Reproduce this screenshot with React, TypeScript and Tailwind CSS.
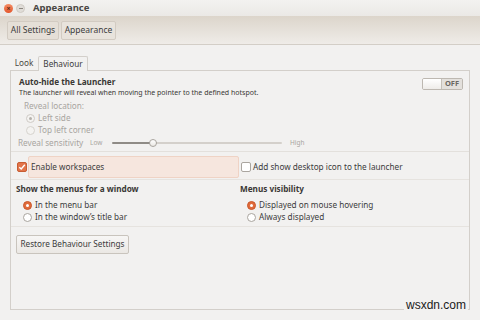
import React from "react";

const Radio = ({ on, disabled }: { on?: boolean; disabled?: boolean }) => (
  <span
    className={
      "inline-flex w-[9px] h-[9px] rounded-full items-center justify-center shrink-0 " +
      (on
        ? disabled
          ? "border border-[#cfcbc6] bg-[#f4f3f1]"
          : "bg-[#e06a3a] border border-[#c9582c]"
        : disabled
        ? "border border-[#d6d3ce] bg-[#f4f3f1]"
        : "border border-[#a9a49e] bg-white")
    }
  >
    {on && (
      <span
        className={
          "w-[3px] h-[3px] rounded-full " + (disabled ? "bg-[#b5b1ac]" : "bg-white")
        }
      />
    )}
  </span>
);

export default function App() {
  const muted = "text-[#a8a5a0]";
  return (
    <div className="relative w-[480px] h-[320px] overflow-hidden bg-[#f2f1f0] font-['Noto_Sans',sans-serif] text-[#3c3c3c]">
      {/* Title bar */}
      <div className="h-[16px] flex items-center pl-[4px] bg-gradient-to-b from-[#f3f2f0] to-[#ebe9e6]">
        <span className="w-[9px] h-[9px] rounded-full bg-gradient-to-b from-[#f48b62] to-[#e3562b] flex items-center justify-center text-[7px] leading-none text-[#5a2a16] font-bold">
          ×
        </span>
        <span className="ml-[3px] w-[9px] h-[9px] rounded-full bg-[#e0ddd8] border border-[#cfcac3] flex items-center justify-center">
          <span className="w-[4px] h-[1px] bg-[#8c8780]" />
        </span>
        <span className="ml-[8px] text-[9.5px] font-bold text-[#4a4743] leading-none">Appearance</span>
      </div>
      {/* Toolbar */}
      <div className="h-[29px] flex items-center gap-[2px] pl-[7px] bg-gradient-to-b from-[#dcd5cb] to-[#efece8] border-b border-[#d3cec7]">
        <div className="h-[19px] w-[52px] flex items-center justify-center rounded-[2px] border border-[#d2cbc2] bg-[#e5dfd7] text-[8.5px]">
          All Settings
        </div>
        <div className="h-[19px] w-[55px] flex items-center justify-center rounded-[2px] border border-[#d2cbc2] bg-[#e8e3dc] text-[8.5px]">
          Appearance
        </div>
      </div>
      {/* Body */}
      <div className="px-[10px] pt-[10px]">
        <div className="flex items-end h-[15px]">
          <div className="w-[28px] h-[14px] flex items-center justify-center text-[8.2px] text-[#4a4743]">Look</div>
          <div className="w-[50px] h-[15px] flex items-center justify-center text-[8.2px] border border-b-0 border-[#d3cfca] rounded-t-[2px] bg-[#f2f1f0] relative top-[1px]">
            Behaviour
          </div>
        </div>
        <div className="w-[460px] h-[240px] border border-[#d3cfca] flex flex-col">
          {/* Auto-hide */}
          <div className="pl-[8px] pr-[6px] pt-[5px] flex">
            <div className="flex-1 flex flex-col">
              <div className="h-[12px] flex items-center text-[8.2px] font-bold text-[#3a3835]">Auto-hide the Launcher</div>
              <div className="h-[10px] flex items-center text-[7px] text-[#3a3835]">
                The launcher will reveal when moving the pointer to the defined hotspot.
              </div>
            </div>
            <div className="mt-[2px] w-[41px] h-[12px] flex rounded-[2px] border border-[#bdb8b1] overflow-hidden">
              <div className="w-[19px] bg-gradient-to-b from-white to-[#eeece9] border-r border-[#c5c0b9]" />
              <div className="flex-1 bg-[#e3e0dc] flex items-center justify-center text-[7.5px] font-bold text-[#6a6762]">OFF</div>
            </div>
          </div>
          <div className={"mt-[2px] pl-[13px] h-[12px] flex items-center text-[8.2px] " + muted}>Reveal location:</div>
          <div className={"pl-[15px] h-[12px] flex items-center gap-[3px] text-[8.2px] " + muted}>
            <Radio on disabled />
            <span>Left side</span>
          </div>
          <div className={"pl-[15px] h-[12px] flex items-center gap-[3px] text-[8.2px] " + muted}>
            <Radio disabled />
            <span>Top left corner</span>
          </div>
          <div className={"mt-[1px] pl-[7px] h-[12px] flex items-center text-[8.2px] " + muted}>
            <span className="w-[72px]">Reveal sensitivity</span>
            <span className="text-[6.5px] w-[22px]">Low</span>
            <div className="relative w-[170px] h-[8px] flex items-center">
              <div className="w-[41px] h-[2px] bg-[#8f8b86] rounded-l" />
              <div className="flex-1 h-[2px] bg-[#d4d0cb] rounded-r" />
              <span className="absolute left-[37px] top-0 w-[8px] h-[8px] rounded-full border border-[#a9a49e] bg-gradient-to-b from-white to-[#ebe8e4]" />
            </div>
            <span className="ml-[8px] text-[6.5px]">High</span>
          </div>
          <div className="mt-[2px] h-[1px] bg-[#e3e0dc]" />
          {/* Workspaces */}
          <div className="pt-[4px] pb-[1px] flex items-center">
            <span className="ml-[6px] w-[10px] h-[10px] rounded-[2px] bg-[#e2744a] border border-[#c75d33] flex items-center justify-center">
              <svg width="8" height="8" viewBox="0 0 8 8">
                <path d="M1.3 4.2 L3.2 6 L6.8 1.8" fill="none" stroke="white" strokeWidth="1.4" />
              </svg>
            </span>
            <div className="ml-[1px] w-[211px] h-[22px] flex items-center pl-[2px] rounded-[2px] bg-[#f6e6de] border border-[#efd3c5] text-[8.2px]">
              Enable workspaces
            </div>
            <span className="ml-[2px] w-[10px] h-[10px] rounded-[2px] bg-white border border-[#aaa59f]" />
            <span className="ml-[2px] text-[8.2px]">Add show desktop icon to the launcher</span>
          </div>
          <div className="h-[1px] bg-[#e6e3df]" />
          {/* Menus */}
          <div className="pt-[3px] flex">
            <div className="w-[229px] pl-[5px] flex flex-col">
              <div className="h-[12px] flex items-center text-[8.2px] font-bold text-[#3a3835]">Show the menus for a window</div>
              <div className="mt-[4px] pl-[7px] h-[12px] flex items-center gap-[3px] text-[8.2px]">
                <Radio on />
                <span>In the menu bar</span>
              </div>
              <div className="pl-[7px] h-[12px] flex items-center gap-[3px] text-[8.2px]">
                <Radio />
                <span>In the window’s title bar</span>
              </div>
            </div>
            <div className="flex-1 flex flex-col">
              <div className="h-[12px] flex items-center text-[8.2px] font-bold text-[#3a3835]">Menus visibility</div>
              <div className="mt-[4px] pl-[7px] h-[12px] flex items-center gap-[3px] text-[8.2px]">
                <Radio on />
                <span>Displayed on mouse hovering</span>
              </div>
              <div className="pl-[7px] h-[12px] flex items-center gap-[3px] text-[8.2px]">
                <Radio />
                <span>Always displayed</span>
              </div>
            </div>
          </div>
          <div className="mt-[3px] h-[1px] bg-[#e6e3df]" />
          <div className="pl-[5px] pt-[8px]">
            <div className="w-[113px] h-[19px] flex items-center justify-center rounded-[2px] border border-[#c9c4bd] bg-gradient-to-b from-[#f7f6f5] to-[#ebe8e4] text-[8.2px]">
              Restore Behaviour Settings
            </div>
          </div>
        </div>
      </div>
      <div className="absolute left-[404px] top-[298px] px-[2px] bg-[#f2f1f0] text-[12px] leading-[14px] text-[#1a1a1a] font-['Liberation_Sans',sans-serif]">
        wsxdn.com
      </div>
    </div>
  );
}
